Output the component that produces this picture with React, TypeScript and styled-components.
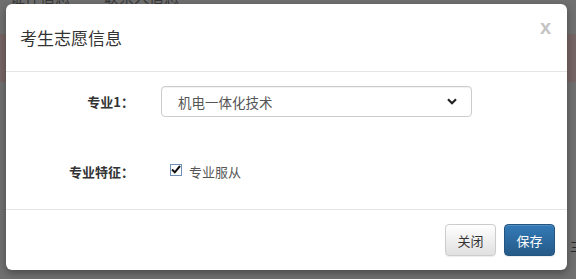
import React from "react";
import styled, { createGlobalStyle } from "styled-components";

const Global = createGlobalStyle`
  html, body { margin: 0; padding: 0; }
  body {
    width: 576px;
    height: 279px;
    overflow: hidden;
    font-family: "Noto Sans CJK SC", "Noto Sans", sans-serif;
  }
  * { box-sizing: border-box; }
`;

const Page = styled.div`
  position: relative;
  width: 576px;
  height: 279px;
  background: #707070;
  overflow: hidden;
`;

const TabBar = styled.div`
  display: flex;
  gap: 34px;
  padding-left: 10px;
  margin-top: -12px;
  height: 17px;
  font-size: 15px;
  line-height: 17px;
  color: #3a3a3a;
`;

const Band = styled.div`
  margin-top: 29px;
  height: 48px;
  background: #776565;
`;

const SideNote = styled.div`
  position: absolute;
  right: -6px;
  top: 238px;
  font-size: 12px;
  color: #2a2a2a;
`;

const Modal = styled.div`
  position: absolute;
  left: 6px;
  top: 4px;
  width: 561px;
  height: 266px;
  background: #fff;
  border-radius: 6px;
  display: flex;
  flex-direction: column;
  box-shadow: 0 3px 9px rgba(0, 0, 0, 0.35);
`;

const Header = styled.div`
  height: 68px;
  border-bottom: 1px solid #e5e5e5;
  display: flex;
  align-items: center;
  justify-content: space-between;
  padding: 0 16px 0 14px;
`;

const Title = styled.h4`
  margin: 0;
  font-size: 17px;
  font-weight: 400;
  color: #333;
  line-height: 24px;
`;

const Close = styled.span`
  align-self: flex-start;
  margin-top: 13px;
  font-family: "Liberation Sans", Arial, sans-serif;
  font-size: 20px;
  font-weight: 700;
  color: #c4c4c4;
  line-height: 20px;
`;

const Body = styled.div`
  flex: 1;
  display: flex;
  flex-direction: column;
  gap: 39px;
  padding-top: 14px;
`;

const FormRow = styled.div`
  display: grid;
  grid-template-columns: 128px 311px;
  column-gap: 27px;
  align-items: center;
`;

const Label = styled.label`
  text-align: right;
  font-size: 13px;
  font-weight: 700;
  color: #333;
`;

const Select = styled.div`
  height: 31px;
  border: 1px solid #ccc;
  border-radius: 4px;
  display: flex;
  align-items: center;
  justify-content: space-between;
  padding: 0 14px 0 16px;
  font-size: 13.5px;
  color: #555;
  box-shadow: inset 0 1px 1px rgba(0, 0, 0, 0.06);
`;

const CheckWrap = styled.div`
  display: flex;
  align-items: center;
  gap: 7px;
  padding-left: 9px;
  height: 31px;
  font-size: 13px;
  color: #555;
`;

const Box = styled.span`
  width: 12px;
  height: 12px;
  border: 1px solid #6f8fb8;
  display: flex;
  align-items: center;
  justify-content: center;
  background: #fff;
  margin-top: -4px;
`;

const Footer = styled.div`
  height: 61px;
  border-top: 1px solid #e5e5e5;
  display: flex;
  justify-content: flex-end;
  align-items: flex-start;
  gap: 8px;
  padding: 14px 12px 0 0;
`;

const Button = styled.button<{ $primary?: boolean }>`
  width: 51px;
  height: 32px;
  border-radius: 4px;
  font-family: "Noto Sans CJK SC", sans-serif;
  font-size: 13px;
  padding: 0;
  cursor: pointer;
  color: ${(p) => (p.$primary ? "#fff" : "#333")};
  border: 1px solid ${(p) => (p.$primary ? "#245580" : "#ccc")};
  background: ${(p) =>
    p.$primary
      ? "linear-gradient(to bottom, #337ab7 0%, #265a88 100%)"
      : "linear-gradient(to bottom, #ffffff 0%, #e0e0e0 100%)"};
  box-shadow: inset 0 1px 0 rgba(255, 255, 255, 0.15), 0 1px 1px rgba(0, 0, 0, 0.075);
`;

export default function App() {
  return (
    <>
      <Global />
      <Page>
        <TabBar>
          <span>证件信息</span>
          <span>联系人信息</span>
        </TabBar>
        <Band />
        <SideNote>三</SideNote>
        <Modal>
          <Header>
            <Title>考生志愿信息</Title>
            <Close>x</Close>
          </Header>
          <Body>
            <FormRow>
              <Label>专业1：</Label>
              <Select>
                <span>机电一体化技术</span>
                <svg width="10" height="7" viewBox="0 0 10 7">
                  <polyline points="1,1.2 5,5.2 9,1.2" fill="none" stroke="#222" strokeWidth="2.2" />
                </svg>
              </Select>
            </FormRow>
            <FormRow>
              <Label>专业特征：</Label>
              <CheckWrap>
                <Box>
                  <svg width="10" height="9" viewBox="0 0 10 9">
                    <polyline points="1,4.5 3.8,7.3 9,1" fill="none" stroke="#111" strokeWidth="2" />
                  </svg>
                </Box>
                <span>专业服从</span>
              </CheckWrap>
            </FormRow>
          </Body>
          <Footer>
            <Button>关闭</Button>
            <Button $primary>保存</Button>
          </Footer>
        </Modal>
      </Page>
    </>
  );
}
